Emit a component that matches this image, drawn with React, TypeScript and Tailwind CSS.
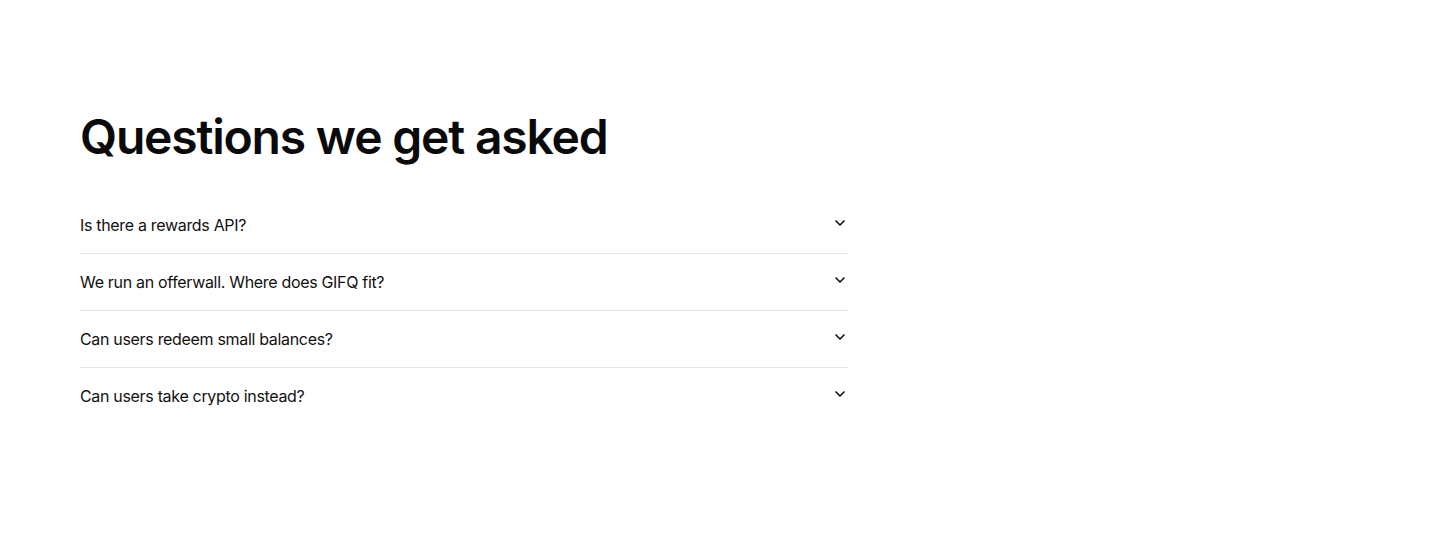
import { ChevronDown } from "lucide-react";

const questions = [
  "Is there a rewards API?",
  "We run an offerwall. Where does GIFQ fit?",
  "Can users redeem small balances?",
  "Can users take crypto instead?",
];

export default function App() {
  return (
    <div className="min-h-[535px] bg-white font-['Inter',sans-serif] text-[#111]">
      <section className="px-20 pt-[111px]">
        <h2 className="text-[48px] font-semibold leading-[1.1] tracking-[-0.025em] text-[#0a0a0a]">
          Questions we get asked
        </h2>
        <div className="mt-[33px] max-w-3xl">
          {questions.map((q, i) => (
            <div
              key={q}
              className={
                i < questions.length - 1 ? "border-b border-[#e5e5e5]" : ""
              }
            >
              <button className="flex w-full items-start justify-between py-4 text-left">
                <span className="text-base leading-6 tracking-[-0.02em] text-[#111]">
                  {q}
                </span>
                <ChevronDown
                  size={16}
                  strokeWidth={2.5}
                  className="mt-[2px] text-[#111]"
                />
              </button>
            </div>
          ))}
        </div>
      </section>
    </div>
  );
}
